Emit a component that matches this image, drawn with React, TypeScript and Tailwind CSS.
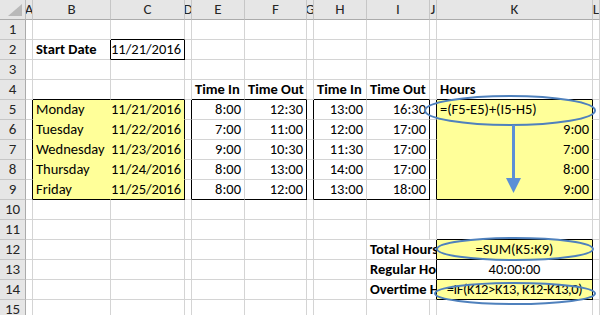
import React from 'react';

// Column letters and pixel widths of the sheet (first entry is the row-number gutter)
const COLS = ['', 'A', 'B', 'C', 'D', 'E', 'F', 'G', 'H', 'I', 'J', 'K', 'L'];
const ROWS = Array.from({ length: 15 }, (_, i) => i + 1);

type Align = 'l' | 'r' | 'c';
type Cell = { v: string; align?: Align; bold?: boolean; span?: number; tight?: boolean };

const cells: Record<string, Cell> = {
  B2: { v: 'Start Date', bold: true },
  C2: { v: '11/21/2016', align: 'r' },
  E4: { v: 'Time In', bold: true },
  F4: { v: 'Time Out', bold: true },
  H4: { v: 'Time In', bold: true },
  I4: { v: 'Time Out', bold: true },
  K4: { v: 'Hours', bold: true },
  B5: { v: 'Monday' },
  C5: { v: '11/21/2016', align: 'r' },
  B6: { v: 'Tuesday' },
  C6: { v: '11/22/2016', align: 'r' },
  B7: { v: 'Wednesday' },
  C7: { v: '11/23/2016', align: 'r' },
  B8: { v: 'Thursday' },
  C8: { v: '11/24/2016', align: 'r' },
  B9: { v: 'Friday' },
  C9: { v: '11/25/2016', align: 'r' },
  E5: { v: '8:00', align: 'r' },
  F5: { v: '12:30', align: 'r' },
  H5: { v: '13:00', align: 'r' },
  I5: { v: '16:30', align: 'r' },
  E6: { v: '7:00', align: 'r' },
  F6: { v: '11:00', align: 'r' },
  H6: { v: '12:00', align: 'r' },
  I6: { v: '17:00', align: 'r' },
  E7: { v: '9:00', align: 'r' },
  F7: { v: '10:30', align: 'r' },
  H7: { v: '11:30', align: 'r' },
  I7: { v: '17:00', align: 'r' },
  E8: { v: '8:00', align: 'r' },
  F8: { v: '13:00', align: 'r' },
  H8: { v: '14:00', align: 'r' },
  I8: { v: '17:00', align: 'r' },
  E9: { v: '8:00', align: 'r' },
  F9: { v: '12:00', align: 'r' },
  H9: { v: '13:00', align: 'r' },
  I9: { v: '18:00', align: 'r' },
  K5: { v: '=(F5-E5)+(I5-H5)' },
  K6: { v: '9:00', align: 'r' },
  K7: { v: '7:00', align: 'r' },
  K8: { v: '8:00', align: 'r' },
  K9: { v: '9:00', align: 'r' },
  I12: { v: 'Total Hours', bold: true, span: 2 },
  I13: { v: 'Regular Hours', bold: true, span: 2 },
  I14: { v: 'Overtime Hours', bold: true, span: 2 },
  K12: { v: '=SUM(K5:K9)', align: 'c' },
  K13: { v: '40:00:00', align: 'c' },
  K14: { v: '=IF(K12>K13, K12-K13,0)', align: 'c', tight: true },
};

// [row1, col1, row2, col2] using column indexes into COLS
const boxes: [number, number, number, number][] = [
  [2, 3, 2, 3],
  [5, 2, 9, 3],
  [5, 5, 9, 6],
  [5, 8, 9, 9],
  [5, 11, 9, 11],
  [12, 11, 12, 11],
  [13, 11, 13, 11],
  [14, 11, 14, 11],
];

const yellow: [number, number, number, number][] = [
  [5, 2, 9, 3],
  [5, 11, 9, 11],
  [12, 11, 12, 11],
  [14, 11, 14, 11],
];

const inRange = (r: number, c: number, [r1, c1, r2, c2]: number[]) =>
  r >= r1 && r <= r2 && c >= c1 && c <= c2;

const isYellow = (r: number, c: number) => yellow.some((y) => inRange(r, c, y));

const rightBlack = (r: number, c: number) =>
  boxes.some(([r1, c1, r2, c2]) => r >= r1 && r <= r2 && (c === c2 || c + 1 === c1));

const bottomBlack = (r: number, c: number) =>
  boxes.some(([r1, c1, r2, c2]) => c >= c1 && c <= c2 && (r === r2 || r + 1 === r1));

function borderClasses(r: number, c: number) {
  let right = 'border-r-[#d4d4d4]';
  let bottom = 'border-b-[#d4d4d4]';
  if (isYellow(r, c)) {
    right = 'border-r-[#ffff99]';
    bottom = 'border-b-[#ffff99]';
  }
  if (rightBlack(r, c)) right = 'border-r-black';
  if (bottomBlack(r, c)) bottom = 'border-b-black';
  return `${right} ${bottom}`;
}

function CornerCell() {
  return (
    <div className="flex items-end justify-end border-r border-b border-r-[#bcbcbc] border-b-[#ababab] bg-[#e6e6e6] pr-[3px] pb-[3px]">
      <svg width="14" height="12" viewBox="0 0 14 12">
        <polygon points="14,0 14,12 0,12" fill="#b9b9b9" />
      </svg>
    </div>
  );
}

function ColHeader({ label }: { label: string }) {
  return (
    <div className="flex items-end justify-center overflow-hidden border-r border-b border-r-[#c6c6c6] border-b-[#ababab] bg-[#e6e6e6] text-[15px] leading-[19px] text-[#262626]">
      {label}
    </div>
  );
}

function RowHeader({ n }: { n: number }) {
  return (
    <div className="flex items-end justify-center border-r border-b border-r-[#ababab] border-b-[#c6c6c6] bg-[#e6e6e6] text-[15px] leading-[19px] text-[#262626]">
      {n}
    </div>
  );
}

export default function App() {
  const gridRows: React.ReactNode[] = [];

  gridRows.push(<CornerCell key="corner" />);
  COLS.slice(1).forEach((l) => gridRows.push(<ColHeader key={`h-${l}`} label={l} />));

  ROWS.forEach((r) => {
    gridRows.push(<RowHeader key={`r-${r}`} n={r} />);
    let skip = 0;
    for (let c = 1; c < COLS.length; c++) {
      if (skip > 0) {
        skip--;
        continue;
      }
      const ref = `${COLS[c]}${r}`;
      const cell = cells[ref];
      const span = cell?.span ?? 1;
      if (span > 1) skip = span - 1;
      const lastCol = c + span - 1;
      const justify =
        cell?.align === 'r' ? 'justify-end' : cell?.align === 'c' ? 'justify-center' : 'justify-start';
      gridRows.push(
        <div
          key={ref}
          className={`flex items-end overflow-hidden whitespace-nowrap border-r border-b text-[14.5px] leading-[19px] text-black ${cell?.tight ? 'px-0 tracking-[-0.4px]' : 'px-[3px]'} ${justify} ${borderClasses(r, lastCol)} ${isYellow(r, c) ? 'bg-[#ffff99]' : 'bg-white'} ${cell?.bold ? 'font-bold' : ''} ${span === 2 ? 'col-span-2' : ''}`}
        >
          {cell?.v}
        </div>
      );
    }
  });

  return (
    <div className="relative h-[315px] w-[600px] overflow-hidden bg-white font-['Carlito','Lato','Liberation_Sans',sans-serif]">
      <div className="grid grid-cols-[26px_7px_78px_74px_7px_53px_62px_7px_53px_63px_7px_156px_7px] grid-rows-[repeat(16,20px)]">
        {gridRows}
      </div>

      {/* callout shapes drawn over the sheet */}
      <svg className="pointer-events-none absolute left-0 top-0" width="600" height="315" viewBox="0 0 600 315">
        <ellipse cx="510" cy="110.5" rx="85" ry="14.5" fill="none" stroke="#4f81bd" strokeWidth="2" />
        <line x1="513.5" y1="125" x2="513.5" y2="180" stroke="#5b8fd6" strokeWidth="3" />
        <polygon points="506,178 521,178 513.5,193" fill="#5b8fd6" />
        <ellipse cx="515" cy="249" rx="78" ry="11" fill="none" stroke="#4f81bd" strokeWidth="2" />
        <ellipse cx="515" cy="293.5" rx="80" ry="10.5" fill="none" stroke="#4f81bd" strokeWidth="2" />
      </svg>
    </div>
  );
}
